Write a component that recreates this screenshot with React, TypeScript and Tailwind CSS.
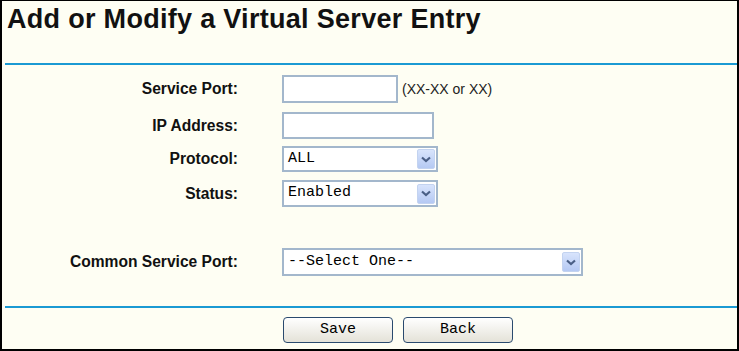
import React from 'react';

const field = "bg-white border-2 border-[#a3b7cc] box-border";

function Chevron() {
  return (
    <svg width="10" height="7" viewBox="0 0 10 7">
      <path d="M1 1.5 L5 5 L9 1.5" fill="none" stroke="#4a5f86" strokeWidth="2.2" />
    </svg>
  );
}

function Select({ value, width }: { value: string; width: string }) {
  return (
    <div className={`${field} ${width} h-full flex items-center pl-[4px] pr-[1px]`}>
      <span className="font-['Liberation_Mono',monospace] text-[15px] text-black">{value}</span>
      <div className="ml-auto w-[18px] h-[20px] rounded-[2px] border border-[#c3d3f0] bg-gradient-to-b from-[#d8e4fc] to-[#b5c9f3] flex items-center justify-center">
        <Chevron />
      </div>
    </div>
  );
}

function Row({ label, className, children }: { label: string; className: string; children: React.ReactNode }) {
  return (
    <div className={`flex items-center ${className}`}>
      <div className="w-[236px] text-right font-bold text-[15.6px] text-[#111]">{label}</div>
      <div className="ml-[44px] h-full flex items-center">{children}</div>
    </div>
  );
}

function Btn({ text }: { text: string }) {
  return (
    <button className="w-[110px] h-[26px] rounded-[4px] border border-[#2a4a6e] bg-gradient-to-b from-white to-[#e4e2d8] font-['Liberation_Mono',monospace] text-[15px] text-black">
      {text}
    </button>
  );
}

export default function App() {
  return (
    <div className="w-[739px] h-[351px] box-border bg-[#fefef3] border-black border-t border-x-2 border-b-2 font-['Liberation_Sans',Arial,sans-serif] flex flex-col overflow-hidden">
      <h1 className="pl-[5px] pt-[3px] text-[27px] leading-[31px] font-bold tracking-[0.3px] text-[#111]">
        Add or Modify a Virtual Server Entry
      </h1>
      <div className="mt-[28px] ml-[3px] h-[2px] bg-[#1b9ad3]" />

      <Row label="Service Port:" className="mt-[10px] h-[28px]">
        <div className={`${field} w-[116px] h-full`} />
        <span className="ml-[4px] text-[14px] text-[#222]">(XX-XX or XX)</span>
      </Row>
      <Row label="IP Address:" className="mt-[9px] h-[27px]">
        <div className={`${field} w-[152px] h-full`} />
      </Row>
      <Row label="Protocol:" className="mt-[7px] h-[26px]">
        <Select value="ALL" width="w-[156px]" />
      </Row>
      <Row label="Status:" className="mt-[8px] h-[27px]">
        <Select value="Enabled" width="w-[156px]" />
      </Row>
      <Row label="Common Service Port:" className="mt-[41px] h-[28px]">
        <Select value="--Select One--" width="w-[301px]" />
      </Row>

      <div className="mt-[30px] ml-[3px] h-[2px] bg-[#1b9ad3]" />
      <div className="mt-[9px] pl-[281px] flex gap-[10px]">
        <Btn text="Save" />
        <Btn text="Back" />
      </div>
    </div>
  );
}
